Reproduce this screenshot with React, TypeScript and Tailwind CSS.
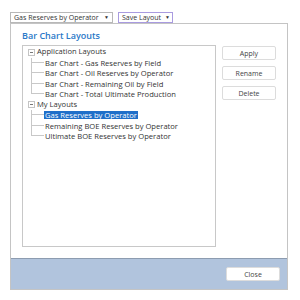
const groups = [
  {
    name: 'Application Layouts',
    items: [
      'Bar Chart - Gas Reserves by Field',
      'Bar Chart - Oil Reserves by Operator',
      'Bar Chart - Remaining Oil by Field',
      'Bar Chart - Total Ultimate Production',
    ],
  },
  {
    name: 'My Layouts',
    items: ['Gas Reserves by Operator', 'Remaining BOE Reserves by Operator', 'Ultimate BOE Reserves by Operator'],
  },
]

const selected = 'Gas Reserves by Operator'

function Expander() {
  return (
    <div className="flex h-[7px] w-[7px] shrink-0 items-center justify-center border border-[#c4c4c4] bg-white">
      <div className="h-px w-[3px] bg-[#777]" />
    </div>
  )
}

function Select({ label, focused }: { label: string; focused?: boolean }) {
  return (
    <div
      className={`flex h-[11px] items-center justify-between overflow-hidden whitespace-nowrap bg-white pl-[3px] pr-[3px] text-[7px] ${
        focused ? 'border border-[#a99be0]' : 'border border-[#b8b8b8]'
      }`}
    >
      <span className="leading-none">{label}</span>
      <span className="ml-[4px] text-[5px] leading-none text-[#333]">▼</span>
    </div>
  )
}

function Btn({ label }: { label: string }) {
  return (
    <button className="flex h-[14px] w-[54px] items-center justify-center rounded-[2px] border border-[#dcdcdc] bg-white text-[7px] leading-none text-[#444]">
      {label}
    </button>
  )
}

export default function App() {
  return (
    <div
      className="h-[300px] w-[300px] bg-white text-[7.6px] text-[#333]"
      style={{ fontFamily: '"Open Sans", "Noto Sans", sans-serif' }}
    >
      <div className="flex gap-[5px] pl-[10px] pt-[12px]">
        <div className="w-[103px]">
          <Select label="Gas Reserves by Operator" />
        </div>
        <div className="w-[55px]">
          <Select label="Save Layout" focused />
        </div>
      </div>

      <div className="ml-[10px] flex h-[267px] w-[278px] flex-col border border-[#c4c4c4]">
        <div className="flex flex-1 flex-col px-[11px] pt-[6px]">
          <div className="text-[9px] font-semibold leading-[12px] text-[#2a78c8]">Bar Chart Layouts</div>
          <div className="mt-[3px] flex flex-1 gap-[6px] pb-[11px]">
            <div className="w-[198px] border border-[#c8c8c8] bg-white pl-[5px] pt-[1px]">
              {groups.map((g) => (
                <div key={g.name}>
                  <div className="flex h-[10.5px] items-center">
                    <Expander />
                    <span className="ml-[2px] leading-none">{g.name}</span>
                  </div>
                  {g.items.map((it, i) => {
                    const last = i === g.items.length - 1
                    return (
                      <div key={it} className="flex h-[10.5px] items-stretch">
                        <div className="ml-[3px] flex w-[13px] flex-col">
                          <div className="h-1/2 border-b border-l border-[#c8c8c8]" />
                          <div className={`h-1/2 ${last ? '' : 'border-l border-[#c8c8c8]'}`} />
                        </div>
                        <div className="flex items-center">
                          <span
                            className={`px-[1px] leading-[8px] whitespace-nowrap ${
                              it === selected ? 'bg-[#1f6fc9] text-white' : ''
                            }`}
                          >
                            {it}
                          </span>
                        </div>
                      </div>
                    )
                  })}
                </div>
              ))}
            </div>
            <div className="flex flex-col gap-[6px] pt-[1px]">
              <Btn label="Apply" />
              <Btn label="Rename" />
              <Btn label="Delete" />
            </div>
          </div>
        </div>
        <div className="flex h-[31px] items-center justify-end border-t border-[#8d9cb0] bg-[#b1c4dd] pr-[7px]">
          <Btn label="Close" />
        </div>
      </div>
    </div>
  )
}
